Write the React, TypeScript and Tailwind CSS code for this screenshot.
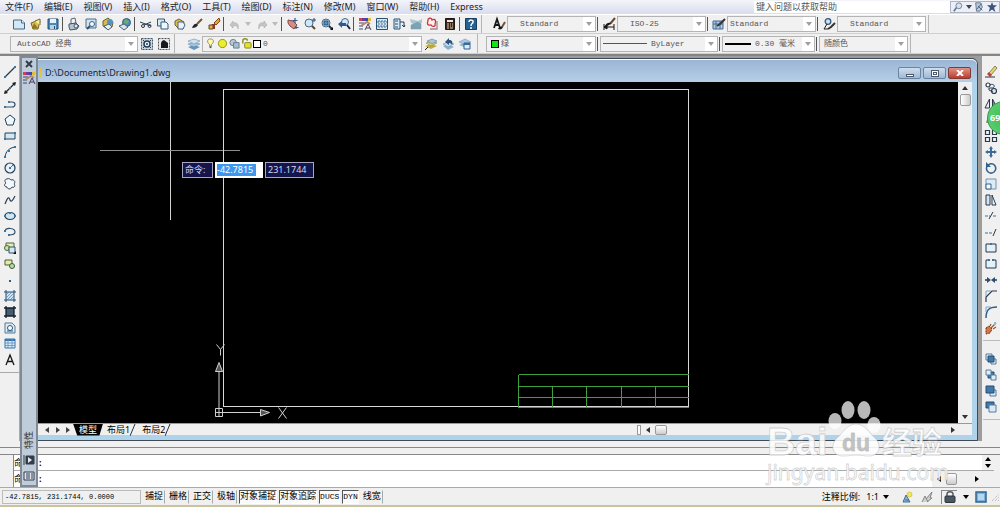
import React from 'react';

type IconMap = { [key: string]: React.ReactNode };

interface IconProps {
    name: string;
    className?: string;
}

interface ComboProps {
    label: string;
    value: string;
    className: string;
    selectClass?: string;
    children?: React.ReactNode;
}

// every glyph is drawn on a 12 x 12 grid
const ICONS: IconMap = {
    new: <><path d="M.5 2h8l3 3v6h-11z" fill="#d3e8f6" stroke="#456985" /><path d="M8.5 2v3h3" fill="#fff" stroke="#456985" /></>,
    open: <><path d="M1 5l8-3 1 1-2 8H3z" fill="#dbc24d" stroke="#766529" /><path d="M5 3l5-2v6" fill="#f7efb0" stroke="#766529" /><path d="M4 5l-2 6 6-1" fill="#8b7830" /></>,
    save: <><path d="M1 1h10v10H1z" fill="#4b86b5" stroke="#234f76" /><path d="M3 1h6v4H3z" fill="#e7f2fa" /><path d="M3 7h6v4H3z" fill="#b7d4e7" /><path d="M7 8h1v3H7z" fill="#264b6d" /></>,
    print: <><path d="M3 1l4-1 1 5-5 1z" fill="#eef3f8" stroke="#56677c" /><path d="M1 6l7-1 3 3-2 3-7 1-1-3z" fill="#b6c3d0" stroke="#41546a" /><circle cx="8" cy="8" r="2" fill="#e4edf5" stroke="#41546a" /></>,
    preview: <><path d="M1 1h10v9H1z" fill="#d0e5f4" stroke="#4c6c88" /><circle cx="7" cy="6" r="2.500" fill="#f6fbff" stroke="#3d5f7c" /><path d="M5 8l-3 3" stroke="#35526d" strokeWidth="2" /></>,
    publish: <><path d="M1 3l5-3 5 4-1 5-5 2-4-3z" fill="#d7bd45" stroke="#6b602a" /><circle cx="8" cy="4" r="3" fill="#5393c2" /><path d="M2 8l5-2 3 3-4 3z" fill="#e5eef5" stroke="#49637b" /></>,
    globe: <><circle cx="7.500" cy="4.500" r="4" fill="#4c8fbc" stroke="#345a7b" /><path d="M6 1l4 2-2 3-3-1z" fill="#6fae62" /><path d="M0 8l5-2 4 3-4 3z" fill="#d9e3ec" stroke="#4d6175" /></>,
    cut: <><path d="M0 4l11 4M4 7l7-3" stroke="#26384c" fill="none" /><circle cx="9.500" cy="8" r="1.500" fill="none" stroke="#26384c" /><circle cx="3" cy="8" r="1.500" fill="none" stroke="#26384c" /></>,
    copy: <><path d="M.5 1h7v7h-7z" fill="#d8e9f6" stroke="#345977" /><path d="M4 4h5l2 2v5H4z" fill="#eef7fc" stroke="#345977" /></>,
    paste: <><path d="M1 3l4-2 5 3-1 7-5-1-3-3z" fill="#d9bd52" stroke="#6f6130" /><path d="M4 4h5l2 3-2 4H4z" fill="#eaf3fa" stroke="#49637b" /></>,
    brush: <><path d="M6 6l5-5" stroke="#7b5430" strokeWidth="2" /><path d="M1 10c1-3 3-5 5-4l1 1c-1 2-3 3-6 3z" fill="#1f2430" /></>,
    match: <><path d="M6 5l5-5 1 3-4 4z" fill="#eda42f" stroke="#7c481c" /><path d="M1 11h6V6H4z" fill="#8d382b" /><path d="M1 7h4v4H1z" fill="#e0b04a" stroke="#6d4726" /></>,
    undo: <path d="M1 7l3-4v2c4-1 6 1 5 6 0-3-2-4-5-3v2z" fill="#c6c6c6" stroke="#a0a0a0" strokeWidth=".5" />,
    redo: <path d="M11 7L8 3v2C4 4 2 6 3 11c0-3 2-4 5-3v2z" fill="#c6c6c6" stroke="#a0a0a0" strokeWidth=".5" />,
    pan: <><path d="M1 2l5 1 4 4-3 4-4-3-2-3z" fill="#d68c83" stroke="#834944" /><path d="M8 0v5M5.500 2.500h5M9 8v3M7.500 9.500h4" stroke="#385b81" strokeWidth="1.200" /></>,
    zoom: <><circle cx="5" cy="5" r="4" fill="#cfe6f4" stroke="#456986" /><path d="M8 8l3 3" stroke="#60472f" strokeWidth="2" /><path d="M10 0v4M8 2h4" stroke="#294d71" /></>,
    zoomWin: <><circle cx="5" cy="5" r="4" fill="#cfe6f4" stroke="#456986" /><path d="M3 3h4v4H3z" fill="#5a94be" stroke="#244e73" /><path d="M8 8l3 3" stroke="#253649" strokeWidth="2" /><path d="M12 9v3H9z" fill="#111" /></>,
    zoomPrev: <><circle cx="7" cy="4" r="3.500" fill="#cfe6f4" stroke="#456986" /><path d="M9 7l3 4" stroke="#1f2d40" strokeWidth="2" /><path d="M0 6l4-3v2h4v3H4v2z" fill="#285d91" /></>,
    props: <><path d="M0 0h3v3H0z" fill="#dc3d4a" /><path d="M3 0h3v3H3z" fill="#713d9b" /><path d="M6 0h3v3H6z" fill="#304eac" /><path d="M9 0h3v3H9z" fill="#e1ba38" /><path d="M0 5h5M0 8h4M0 11h4" stroke="#3f4b77" /><path d="M2 8l6-4 3 2" stroke="#b08770" strokeWidth="2" /><path d="M6 12l3-6 3 6M7 10h4" fill="none" stroke="#4c3c58" /></>,
    grid: <><path d="M.5.500h11v11H.5z" fill="#d9e9f5" stroke="#285274" /><path d="M3 2v9M6 2v9M9 2v9M1 4h10M1 8h10" stroke="#416b8d" strokeDasharray="2 1" /></>,
    tool: <><path d="M1 1h6v10H1z" fill="#d5e7f4" stroke="#285274" /><path d="M2 3h3M2 6h3M2 9h3" stroke="#285274" /><path d="M7 4h4v5m-2-2l2 2 1-2" stroke="#293e56" fill="none" /></>,
    sheet: <><path d="M0 1l8 2 4-2v4l-4 2-7-2z" fill="#acc5ce" /><path d="M1 7l7-3 3 2v5H1z" fill="#75a5b7" stroke="#8796a0" strokeWidth=".5" /></>,
    markup: <><path d="M1 3c-1-3 4-4 4-1 4-2 4 2 3 4 1 3-3 3-4 1-4 1-4-2-3-4z" fill="#fff1f1" stroke="#d23038" strokeWidth="1.300" /><path d="M10 3v8H3" fill="none" stroke="#a78589" strokeWidth="1.300" /></>,
    calc: <><path d="M1.500.500h9v11h-9z" fill="#3a2420" stroke="#211715" /><path d="M3 2h6v2H3z" fill="#efe9db" /><path d="M3 6h2M6 6h1M8 6h1M3 8h2M6 8h1M8 8h1M3 10h2M6 10h3" stroke="#e9cda7" /></>,
    help: <><path d="M.5.500h11v11H.5z" fill="#286293" stroke="#173e62" /><path d="M4 4c0-3 5-2 4 0C8 6 6 5 6 8M6 9v2" stroke="#fff" strokeWidth="1.500" fill="none" /></>,
    textStyle: <><path d="M1 10l3-9 3 9M2 7h4" fill="none" stroke="#171717" strokeWidth="1.800" /><path d="M12 4l-3 5" stroke="#705437" strokeWidth="2" /><path d="M5 11c1-3 3-3 5-2-1 2-2 3-5 2z" fill="#171717" /></>,
    dimStyle: <><path d="M1 6v6M11 6v6M1 9h10M1 9l3-2v4z" stroke="#151515" fill="#151515" /><path d="M12 0L7 6" stroke="#694b35" strokeWidth="2" /><path d="M2 8c1-3 4-4 6-3-1 2-3 3-6 3z" fill="#151515" /></>,
    tableStyle: <><path d="M0 3h10v8H0z" fill="#b1cce2" stroke="#416b96" /><path d="M0 6h10M3 3v8M7 3v8" stroke="#416b96" /><path d="M12 1L7 6 4 8" stroke="#3a3433" strokeWidth="2" /></>,
    leaderStyle: <><circle cx="5" cy="3.500" r="2.800" fill="#cae1f0" stroke="#31587c" strokeWidth="1.300" /><path d="M4 6l-3 5h4" fill="none" stroke="#222" /><path d="M12 5L8 9l-3 2" stroke="#39312d" strokeWidth="2" /></>,
    gear: <><path d="M.5.500h11v11H.5z" fill="#c8d5df" stroke="#405367" strokeDasharray="2 1" /><circle cx="6" cy="6" r="3" fill="#edf4f8" stroke="#263e54" strokeWidth="1.500" /><circle cx="6" cy="6" r="1" fill="#263e54" /><path d="M2 2l2 2M10 2L8 4M2 10l2-2M10 10L8 8" stroke="#263e54" /></>,
    home: <><path d="M.5.500h11v11H.5z" fill="#e8e8e8" stroke="#555" strokeDasharray="2 1" /><path d="M6 2l4 3v5H3V5l1-2z" fill="#15191d" /></>,
    layers: <><path d="M0 9l6-2 6 2-6 3z" fill="#6894ba" /><path d="M0 6l6-2 6 2-6 3z" fill="#a7c6df" stroke="#5481a9" strokeWidth=".5" /><path d="M0 3l6-2 6 2-6 3z" fill="#d1e2ee" stroke="#5481a9" strokeWidth=".5" /></>,
    layerSet: <><path d="M0 8l6-2 6 2-6 3z" fill="#bfae3a" /><path d="M1 5l5-2 6 2-6 3z" fill="#d8d36b" stroke="#777637" strokeWidth=".5" /><path d="M2 3l5-2 5 2-5 3z" fill="#a9c6da" stroke="#4e718d" strokeWidth=".5" /><path d="M0 12l3-3" stroke="#222" /></>,
    layerPrev: <><path d="M1 8l5-2 6 3-6 3z" fill="#8eb3d0" /><path d="M1 6l5-2 6 2-6 3z" fill="#c6dbea" stroke="#5b7fa1" strokeWidth=".5" /><path d="M3 4l4-4v2c3 0 4 2 3 5-1-2-2-2-3-2v2z" fill="#28547e" /></>,
    layerState: <><path d="M0 7l5-2 5 2-5 2z" fill="#8eb3d0" /><path d="M0 4l6-3 6 3-6 3z" fill="#afc7dc" stroke="#6488a5" strokeWidth=".5" /><path d="M5 5h6v6H5z" fill="#dcecf8" stroke="#2e5f8f" /><path d="M5 5h6v2H5z" fill="#2f6da3" /></>,
    bulb: <><path d="M6 1c4 0 4 4 1 6v2H5V7C2 5 2 1 6 1z" fill="#fffcae" stroke="#908747" /><path d="M5 10h2" stroke="#555" strokeWidth="2" /></>,
    sun: <circle cx="6" cy="6" r="4.500" fill="#eded28" stroke="#8b8d1e" />,
    freeze: <><circle cx="4.500" cy="5" r="3.500" fill="#bcc9d3" stroke="#637c91" /><path d="M5 5h6v6H5z" fill="#a9bccb" stroke="#637c91" /></>,
    unlock: <><path d="M2 6V3c0-3 5-3 5 0" fill="none" stroke="#8a8d20" strokeWidth="1.500" /><rect x="4" y="5" width="7" height="6" rx="1" fill="#e2e02e" stroke="#83851d" /></>,
    line: <><path d="M1 11L11 1" stroke="#27394a" strokeWidth="1.200" /><path d="M0 10h2v2H0zM10 0h2v2h-2z" fill="#3976a4" /></>,
    xline: <><path d="M1 11L11 1" stroke="#18222c" strokeWidth="1.200" /><path d="M0 12l1-4 3 3zM12 0L8 1l3 3z" fill="#222" /><path d="M5 5h2v2H5z" fill="#3976a4" /></>,
    pline: <><path d="M1 9h7c4 0 4-5 0-5H5" fill="none" stroke="#31506e" strokeWidth="1.200" /><path d="M0 8h2v2H0zM4 3h2v2H4z" fill="#3976a4" /></>,
    polygon: <path d="M6 1l5 4-2 6H3L1 5z" fill="#eef7fc" stroke="#263e56" />,
    rect: <><path d="M1 3h10v6H1z" fill="#d2e7f3" stroke="#263e56" /><path d="M0 8h2v2H0zM10 2h2v2h-2z" fill="#3976a4" /></>,
    arc: <><path d="M1 11C2 5 5 2 11 1" fill="none" stroke="#263e56" /><path d="M0 10h2v2H0zM4 4h2v2H4zM10 0h2v2h-2z" fill="#3976a4" /></>,
    circle: <><circle cx="6" cy="6" r="5" fill="#e5f2f9" stroke="#263e56" strokeWidth="1.200" /><path d="M6 6l3-3" stroke="#3976a4" /><path d="M5 5h2v2H5z" fill="#3976a4" /></>,
    cloud: <path d="M3 1c2-1 3 0 4 1 3-1 5 2 3 4 2 2 0 4-2 3-1 3-5 2-5 0C0 9 0 6 2 5 0 3 1 1 3 1z" fill="#f4f8fb" stroke="#263e56" />,
    spline: <path d="M1 10c3-8 4-7 5-4s3 0 5-4" fill="none" stroke="#263e56" strokeWidth="1.200" />,
    ellipse: <><ellipse cx="6" cy="6" rx="5" ry="3.500" fill="#cee5f2" stroke="#263e56" strokeWidth="1.200" /><path d="M5 2h2v2H5zM0 5h2v2H0zM10 5h2v2h-2z" fill="#3976a4" /></>,
    ellipseArc: <><path d="M1 5c1-4 10-3 10 1 0 3-4 3-6 3" fill="none" stroke="#31506e" strokeWidth="1.200" /><path d="M0 4h2v2H0zM4 8h2v2H4z" fill="#3976a4" /></>,
    insert: <><path d="M2 1h8v6H2z" fill="#e8ecb3" stroke="#47663e" /><circle cx="3" cy="6" r="2.500" fill="#cfe6a2" stroke="#436742" /><path d="M5 5h6v6H5z" fill="#d6e7f3" stroke="#31506e" /><path d="M12 9v3H9z" fill="#111" /></>,
    block: <><path d="M1 2h7v5H1z" fill="#e6eca4" stroke="#465e3f" /><circle cx="8" cy="8" r="2.500" fill="#b8dc9c" stroke="#365b3d" /></>,
    point: <path d="M5 6h2v2H5z" fill="#255c8e" />,
    hatch: <><path d="M2 2h8v8H2z" fill="#d1e3f0" /><path d="M2 0v12M10 0v12M0 2h12M0 10h12" stroke="#254b70" /><path d="M2 5l3-3M2 8l6-6M3 10l7-7M6 10l4-4" stroke="#4c83ae" strokeWidth=".7" /></>,
    gradient: <><path d="M2 2h8v8H2z" fill="#485c70" /><path d="M2 0v12M10 0v12M0 2h12M0 10h12" stroke="#12202e" strokeWidth="1.300" /></>,
    region: <><path d="M1 1h7l3 3v7H1z" fill="#dcecf6" stroke="#4e7b9b" /><circle cx="6" cy="6" r="2.500" fill="#fff" stroke="#2d5678" /><path d="M3 9h6" stroke="#2d5678" /></>,
    table: <><path d="M1 1h10v9H1z" fill="#dcecf8" stroke="#3774aa" /><path d="M1 2h10" stroke="#3774aa" strokeWidth="2" /><path d="M1 5h10M1 7.500h10M4 1v9M8 1v9" stroke="#5d91bd" strokeWidth=".8" /></>,
    mtext: <path d="M2 11L6 1l4 10M3.500 7.500h5" fill="none" stroke="#171717" strokeWidth="1.300" />,
    erase: <><path d="M4 7l6-7 2 2-6 7z" fill="#e4d868" stroke="#625a36" strokeWidth=".7" /><path d="M2 8l2-2 3 3-2 2z" fill="#bd3f41" /><path d="M0 11h10" stroke="#333" /></>,
    copyObj: <><circle cx="3" cy="3" r="2" fill="#fff" stroke="#27394a" strokeWidth="1.200" /><circle cx="9" cy="9" r="2.500" fill="#d2e7f3" stroke="#27394a" strokeWidth="1.200" /><path d="M5 3c3-2 6 1 3 3H4v2l4 2" fill="none" stroke="#27394a" /></>,
    mirror: <><path d="M4.500 1v9H0z" fill="#e7eff5" stroke="#27394a" /><path d="M7.500 1v9H12z" fill="#6b9ec4" stroke="#27394a" /></>,
    offset: <><path d="M10 1C5 1 2 4 2 9" fill="none" stroke="#27394a" /><circle cx="7" cy="8" r="3" fill="none" stroke="#27394a" /></>,
    array: <path d="M.5.500h4v4h-4zM7.500.500h4v4h-4zM.5 7.500h4v4h-4zM7.500 7.500h4v4h-4z" fill="#eef4f8" stroke="#27394a" strokeWidth="1.200" />,
    move: <path d="M6 0l2 3H7v2h2V4l3 2-3 2V7H7v2h1l-2 3-2-3h1V7H3v1L0 6l3-2v1h2V3H4z" fill="#3b6b96" />,
    rotate: <><path d="M3 3c6-4 10 3 6 7-4 3-9-1-7-6" fill="none" stroke="#31618b" strokeWidth="1.500" /><path d="M1 0v5h5z" fill="#31618b" /></>,
    scale: <><path d="M1 1h10v10H1z" fill="#dcecf6" stroke="#7294ae" /><path d="M1 6h5v5H1z" fill="#f8fbfd" stroke="#31618b" /></>,
    stretch: <><path d="M1 1h4v10H1z" fill="#d3e5f1" stroke="#27394a" /><path d="M7 1l4 10H7z" fill="#eff5f9" stroke="#27394a" /></>,
    trim: <><path d="M0 6h5M8 6h4" stroke="#3e7198" strokeDasharray="3 1" /><path d="M4 9l4-7" stroke="#27394a" /></>,
    extend: <><path d="M0 7h8" stroke="#3e7198" strokeDasharray="3 1" /><path d="M8 10l3-7" stroke="#27394a" /></>,
    breakPt: <><path d="M1 2h10v8H1z" fill="#e5f1f8" stroke="#27394a" /><path d="M5 1h2v2H5z" fill="#3976a4" /></>,
    breakGap: <><path d="M4 2H1v8h10V2H8" fill="#e5f1f8" stroke="#27394a" /><path d="M3 1h2v2H3zM7 1h2v2H7z" fill="#3976a4" /></>,
    join: <><path d="M0 6h4M8 6h4" stroke="#27394a" strokeWidth="1.500" /><path d="M2 3l4 3-4 3zM10 3L6 6l4 3z" fill="#294d71" /></>,
    chamfer: <><path d="M1 12V7l6-6h5" fill="none" stroke="#27394a" strokeWidth="1.200" /><path d="M1 6V1h5" fill="none" stroke="#7ba7c8" /></>,
    fillet: <><path d="M1 12C1 4 4 1 12 1" fill="none" stroke="#31618b" strokeWidth="1.500" /><path d="M1 6V1h5" fill="none" stroke="#7ba7c8" /></>,
    explode: <><path d="M1 6l3-2 3 3-2 4-4 1z" fill="#d37844" stroke="#6e2c25" strokeDasharray="2 1" /><path d="M6 6l5-5M8 7l3-2M5 4l1-2" stroke="#9b5a2c" strokeWidth="1.300" /><path d="M9 0h2v3h-2z" fill="#9ab6c8" /></>,
    front: <><path d="M1 1h6v6H1zM6 6h5v5H6z" fill="#e2edf5" stroke="#537ea1" /><path d="M3 3h6v6H3z" fill="#4179a9" stroke="#254f76" /></>,
    back: <><path d="M3 3h6v6H3z" fill="#4179a9" stroke="#254f76" /><path d="M1 1h5v5H1zM6 6h5v5H6z" fill="#e2edf5" stroke="#537ea1" /></>,
    above: <><path d="M5 5h6v6H5z" fill="#dbeaf5" stroke="#537ea1" /><path d="M1 1h8v7H1z" fill="#4179a9" stroke="#254f76" /></>,
    under: <><path d="M1 1h8v6H1z" fill="#4179a9" stroke="#254f76" /><path d="M4 4h7v7H4z" fill="#dbeaf5" stroke="#537ea1" /></>,
    search: <><circle cx="7" cy="4.500" r="3.500" fill="#d6e4f0" stroke="#64758b" /><path d="M4 7l-3 4" stroke="#64758b" strokeWidth="2" /></>,
    comm: <><path d="M2 1h6l2 5-3 5H3z" fill="#bdc9d9" stroke="#596b86" /><path d="M3 9l6-7M5 5l5 5" stroke="#3d526e" /></>,
    star: <path d="M6 0l1.500 4H12L8.500 7l1.500 5-4-3-4 3 1.500-5L0 4h4.500z" fill="#3e5477" />,
    annoVis: <><path d="M2 11l3-7 4 7zM4 9h4" fill="#91b8d7" stroke="#416d92" /><circle cx="8.500" cy="3.500" r="2.500" fill="#f5e64d" stroke="#b4a93e" strokeWidth=".5" /></>,
    annoAuto: <path d="M1 11l3-6 3 6M5 8l6-7-2 6h2l-5 4" fill="#d0d0d0" stroke="#858585" />,
    lock: <><path d="M3 6V3c0-3 6-3 6 0v3" fill="none" stroke="#555e68" strokeWidth="1.500" /><rect x="1" y="5" width="10" height="6.500" rx="1" fill="#4b5662" stroke="#2c343d" /></>,
    clean: <><path d="M1 1h10v10H1z" fill="#7eb1dc" stroke="#32648e" strokeWidth="1.500" /><path d="M3 3h6v6H3z" fill="#b7d6ef" /></>
};

const STANDARD_ICONS = [
    ['new', 'open', 'save'],
    ['print', 'preview', 'publish', 'globe'],
    ['cut', 'copy', 'paste', 'brush', 'match']
];
const VIEW_ICONS = ['pan', 'zoom', 'zoomWin', 'zoomPrev'];
const PALETTE_ICONS = ['props', 'grid', 'tool', 'sheet', 'markup', 'calc'];
const DRAW_ICONS = [
    'line', 'xline', 'pline', 'polygon', 'rect', 'arc', 'circle', 'cloud', 'spline', 'ellipse',
    'ellipseArc', 'insert', 'block', 'point', 'hatch', 'gradient', 'region', 'table', 'mtext'
];
const MODIFY_ICONS = [
    'erase', 'copyObj', 'mirror', 'offset', 'array', 'move', 'rotate', 'scale', 'stretch', 'trim',
    'extend', 'breakPt', 'breakGap', 'join', 'chamfer', 'fillet', 'explode'
];
const ORDER_ICONS = ['front', 'back', 'above', 'under'];
const MENUS = [
    '文件(F)', '编辑(E)', '视图(V)', '插入(I)', '格式(O)', '工具(T)', '绘图(D)',
    '标注(N)', '修改(M)', '窗口(W)', '帮助(H)', 'Express'
];
const MODES = [
    { text: '捕捉', on: false },
    { text: '栅格', on: false },
    { text: '正交', on: false },
    { text: '极轴', on: false },
    { text: '对象捕捉', on: true },
    { text: '对象追踪', on: true },
    { text: 'DUCS', on: true },
    { text: 'DYN', on: true },
    { text: '线宽', on: false }
];

const Icon = ({ name, className = 'size-3' }: IconProps) => (
    <svg viewBox="0 0 12 12" className={`${className} shrink-0 overflow-visible`} fill="none" aria-hidden="true">
        {ICONS[name]}
    </svg>
);

const ToolButton = ({ name }: { name: string }) => (
    <button aria-label={name} className="flex h-4 w-[17px] shrink-0 items-center justify-center">
        <Icon name={name} />
    </button>
);

const Arrow = ({ className }: { className: string }) => (
    <svg viewBox="0 0 6 4" className={`h-1 w-1.5 shrink-0 ${className}`} aria-hidden="true">
        <path d="M0 0h6L3 4z" fill="currentColor" />
    </svg>
);

const Divider = () => <span className="mx-px h-3.5 w-px shrink-0 border-l border-[#555] box-content" />;

const Combo = ({ label, value, className, selectClass = 'pl-1', children }: ComboProps) => (
    <div className={`flex h-4 shrink-0 items-center border border-[#b4b4b4] bg-[#f1f1f1] ${className}`}>
        {children}
        <select
            aria-label={label}
            className={`h-3.5 min-w-0 flex-1 appearance-none bg-transparent font-['Liberation_Mono','Noto_Sans_CJK_SC',monospace] text-[8px] leading-3.5 text-[#555] outline-none ${selectClass}`}
        >
            <option>{value}</option>
        </select>
        <span className="pointer-events-none flex h-3.5 w-3 items-center justify-center bg-white">
            <Arrow className="text-[#a0a0a0]" />
        </span>
    </div>
);

const MenuBar = () => (
    <header className="flex h-3.5 items-center justify-between bg-linear-to-b from-[#f4f5fb] to-[#d8dced] pl-[5px]">
        <nav className="flex gap-[11px] whitespace-nowrap text-[9px] leading-3 text-[#222]">
            {MENUS.map(menu => <button key={menu}>{menu}</button>)}
        </nav>
        <div className="flex h-3.5 items-center">
            <input
                aria-label="帮助"
                placeholder="键入问题以获取帮助"
                className="h-3 w-[196px] bg-white pl-0.5 text-[9px] leading-3 placeholder:text-[#555]"
            />
            <div className="flex h-3 w-[50px] items-center justify-between border border-[#aeb4c4] bg-[#eceffa] px-0.5 text-[#555]">
                <Icon name="search" className="size-2.5" />
                <Arrow className="text-[#444]" />
                <Icon name="comm" className="size-2.5" />
                <Icon name="star" className="size-2.5" />
            </div>
        </div>
    </header>
);

const StandardBar = () => (
    <div className="flex h-5 items-center overflow-hidden border-y border-t-white border-b-[#cfcfcf]">
        <div className="flex h-full items-center border-r border-[#b5b5b5] pl-2.5 pr-0.5">
            {STANDARD_ICONS.map(group => (
                <React.Fragment key={group[0]}>
                    {group.map(name => <ToolButton key={name} name={name} />)}
                    <Divider />
                </React.Fragment>
            ))}
            <ToolButton name="undo" />
            <Arrow className="mx-0.5 text-[#bbb]" />
            <ToolButton name="redo" />
            <Arrow className="mx-0.5 text-[#bbb]" />
            <Divider />
            {VIEW_ICONS.map(name => <ToolButton key={name} name={name} />)}
            <Divider />
            {PALETTE_ICONS.map(name => <ToolButton key={name} name={name} />)}
            <Divider />
            <ToolButton name="help" />
        </div>
        <div className="flex h-full items-center border-r border-[#b5b5b5] pl-2 pr-0.5">
            <ToolButton name="textStyle" />
            <Combo label="文字样式" value="Standard" className="w-[89px]" selectClass="pl-3" />
            <Divider />
            <ToolButton name="dimStyle" />
            <Combo label="标注样式" value="ISO-25" className="w-[89px]" selectClass="pl-3" />
            <Divider />
            <ToolButton name="tableStyle" />
            <Combo label="表格样式" value="Standard" className="w-[89px]" selectClass="pl-0.5" />
            <Divider />
            <ToolButton name="leaderStyle" />
            <Combo label="多重引线样式" value="Standard" className="w-[89px]" selectClass="pl-3" />
        </div>
    </div>
);

const LayerBar = () => (
    <div className="flex h-5 items-center overflow-hidden border-b border-[#cfcfcf]">
        <div className="flex h-full items-center border-r border-[#b5b5b5] pl-2.5 pr-0.5">
            <Combo label="工作空间" value="AutoCAD 经典" className="w-[128px]" selectClass="pl-1.5" />
            <ToolButton name="gear" />
            <ToolButton name="home" />
        </div>
        <div className="flex h-full items-center border-r border-[#b5b5b5] pl-2.5 pr-1">
            <ToolButton name="layers" />
            <Combo label="图层" value="0" className="w-[220px]" selectClass="pl-0.5">
                <span className="flex items-center gap-px pl-0.5">
                    <Icon name="bulb" className="size-[11px]" />
                    <Icon name="sun" className="size-[11px]" />
                    <Icon name="freeze" className="size-[11px]" />
                    <Icon name="unlock" className="size-[11px]" />
                    <span className="size-2 border border-black bg-white" />
                </span>
            </Combo>
            <ToolButton name="layerSet" />
            <ToolButton name="layerPrev" />
            <ToolButton name="layerState" />
        </div>
        <div className="flex h-full items-center border-r border-[#b5b5b5] pl-2 pr-0.5">
            <Combo label="颜色" value="绿" className="w-[110px]" selectClass="pl-0.5">
                <span className="ml-1 size-2 border border-black bg-[#12e312]" />
            </Combo>
            <Divider />
            <Combo label="线型" value="ByLayer" className="w-[118px]" selectClass="pl-1">
                <span className="ml-0.5 h-px w-11 bg-[#555]" />
            </Combo>
            <Divider />
            <Combo label="线宽" value="0.30 毫米" className="w-[93px]" selectClass="pl-1">
                <span className="ml-0.5 h-0.5 w-[26px] bg-black" />
            </Combo>
            <Divider />
            <Combo label="打印样式" value="随颜色" className="w-[89px]" selectClass="pl-1" />
        </div>
    </div>
);

const Drawing = () => (
    <svg className="block h-full w-full" aria-label="Drawing1" shapeRendering="crispEdges" fill="none">
        <path d="M132.500 0v138" stroke="#d0d0d0" />
        <path d="M62 68.500h140" stroke="#8e8e8e" />
        <path d="M185.500 7.500h465v317h-465z" stroke="#d8d8d8" />
        <path d="M480.500 292.500h170M480.500 304.500h170M480.500 315.500h170M480.500 325.500h170M480.500 292.500v33M514.500 304.500v21M548.500 304.500v21M583.500 304.500v21M617.500 304.500v21" stroke="#3ea13e" />
        <g stroke="#d0d0d0" shapeRendering="auto">
            <path d="M177.500 326.500h7v8h-7zM181 334V289M177 330.500h46" />
            <path d="M181 280.500l-3.500 9h7zM222.500 327.500v6.500l9-3.500z" fill="#555" />
            <path d="M178.500 262.500l4 5v6M186.500 262.500l-4 5M240.500 325.500l8 11M248.500 325.500l-8 11" />
        </g>
    </svg>
);

const DynamicInput = () => (
    <div className="absolute left-36 top-20 flex h-4 gap-0.5 text-[9px] leading-3 text-[#d5d5ee]">
        <label htmlFor="dyn-x" className="w-[31px] border border-[#a7a7c4] bg-[#15154d] px-0.5 py-px">命令:</label>
        <div className="w-12 border border-white bg-white p-px">
            <input id="dyn-x" defaultValue="-42.7815" className="block h-3 w-[39px] bg-[#3d97ee] text-[9px] leading-3 text-white" />
        </div>
        <input aria-label="Y" defaultValue="231.1744" className="w-[49px] border border-[#a7a7c4] bg-[#15154d] px-0.5" />
    </div>
);

const LayoutTabs = () => (
    <div className="flex h-3 items-center justify-between border-t border-[#999] bg-[#f0f0f0] pr-3 text-[9px] leading-3">
        <div className="flex h-full items-center">
            <div className="flex w-[35px] justify-between pl-1.5 pr-0.5 text-[#444]">
                <Arrow className="rotate-90" />
                <Arrow className="-rotate-90" />
                <Arrow className="-rotate-90" />
            </div>
            <button className="bg-black px-1.5 text-white [clip-path:polygon(0_0,100%_0,88%_100%,14%_100%)]">模型</button>
            <button className="flex items-center pl-1">布局1<svg className="h-3 w-1.5" viewBox="0 0 6 12"><path d="M0 12L5 0" stroke="#333" /></svg></button>
            <button className="flex items-center pl-1.5">布局2<svg className="h-3 w-1.5" viewBox="0 0 6 12"><path d="M0 12L5 0" stroke="#333" /></svg></button>
        </div>
        <div className="flex h-full w-[35%] items-center gap-1 text-[#333]">
            <span className="h-2.5 w-1 border border-[#999] bg-white" />
            <Arrow className="rotate-90" />
            <span className="h-2.5 w-3 rounded-xs border border-[#999] bg-linear-to-b from-white to-[#ccc]" />
            <Arrow className="ml-auto mr-1 -rotate-90" />
        </div>
    </div>
);

const DrawingWindow = () => (
    <section className="flex min-w-0 flex-1 flex-col rounded-tr-md border border-[#3e4b57] bg-[#b0d3ec]">
        <div className="flex h-[23px] items-center gap-1 rounded-tr-md border-t border-white bg-linear-to-b from-[#9bb6d5] to-[#b6cfe7] pl-px pr-1.5 pt-1">
            <span className="h-2.5 w-0.5 bg-[#dfc542]" />
            <h1 className="flex-1 text-[9px] leading-3 text-[#1a2430]">D:\Documents\Drawing1.dwg</h1>
            <div className="flex gap-0.5">
                <button aria-label="最小化" className="flex h-3 w-[23px] items-center justify-center rounded-xs border border-[#6b84a2] bg-linear-to-b from-[#cfdeed] to-[#9fb9d5]">
                    <span className="mt-1 h-[3px] w-2 border border-[#4b5a6d] bg-white" />
                </button>
                <button aria-label="最大化" className="flex h-3 w-[23px] items-center justify-center rounded-xs border border-[#6b84a2] bg-linear-to-b from-[#cfdeed] to-[#9fb9d5]">
                    <span className="flex h-[7px] w-2 items-center justify-center border border-[#4b5a6d] bg-white">
                        <span className="h-[3px] w-1 border border-[#4b5a6d]" />
                    </span>
                </button>
                <button aria-label="关闭" className="flex h-3 w-[23px] items-center justify-center rounded-xs border border-[#7c3b36] bg-linear-to-b from-[#de9187] to-[#bd3a2b]">
                    <svg viewBox="0 0 8 6" className="h-1.5 w-2"><path d="M1 0l6 6M7 0L1 6" stroke="#fff" strokeWidth="2" /></svg>
                </button>
            </div>
        </div>
        <div className="mb-[5px] mr-[5px] flex flex-1 flex-col">
            <div className="flex flex-1">
                <div className="relative min-w-0 flex-1 bg-black">
                    <div className="absolute inset-0"><Drawing /></div>
                    <DynamicInput />
                </div>
                <div className="flex w-3.5 flex-col items-center bg-[#f0f0f0] py-1 text-[#333]">
                    <Arrow className="rotate-180" />
                    <span className="mt-1 h-3 w-[11px] rounded-xs border border-[#999] bg-linear-to-r from-white to-[#ccc]" />
                    <Arrow className="mt-auto" />
                </div>
            </div>
            <LayoutTabs />
        </div>
    </section>
);

const PropertiesPalette = () => (
    <aside className="absolute bottom-0 left-5 top-0.5 flex w-[18px] flex-col items-center border-2 border-[#7f8a94] bg-[#bfcddb] pt-0.5">
        <button aria-label="关闭特性"><svg viewBox="0 0 8 8" className="block size-2"><path d="M1 1l6 6M7 1L1 7" stroke="#333d4a" strokeWidth="2" /></svg></button>
        <div className="mt-1"><Icon name="props" /></div>
        <span className="mt-auto text-[9px] leading-3 text-[#333] [writing-mode:sideways-lr]">特性</span>
        <svg viewBox="0 0 12 10" className="mt-1.5 h-2.5 w-3"><path d="M1 0v10" stroke="#333d4a" /><path d="M3 1h8v8H3z" stroke="#333d4a" fill="#333d4a" /><path d="M5 2v6l4-3z" fill="#e3eaf1" /></svg>
        <svg viewBox="0 0 12 10" className="mb-1 mt-1.5 h-2.5 w-3"><path d="M1 1h10v8H1z" stroke="#333d4a" fill="#dce5ee" /><path d="M3 3h4M3 5h4M3 7h4M9 2v6" stroke="#333d4a" /></svg>
    </aside>
);

const CommandLine = () => (
    <section className="flex h-[46px] flex-col bg-[#f0f0f0] pt-1.5 text-[9px] leading-3 text-black">
        <div className="h-2 border-y border-[#888]" />
        <div className="ml-[13px] mr-1.5 flex flex-1 flex-col border-l border-[#888]">
            <div className="flex h-4 items-center border-b border-[#aaa] bg-white">
                <span className="w-[25px]">命令</span>
                <span className="flex-1 font-bold">:</span>
                <div className="flex h-full w-3 flex-col items-center justify-between bg-[#f0f0f0] py-0.5">
                    <Arrow className="rotate-180" />
                    <Arrow className="" />
                </div>
            </div>
            <div className="flex flex-1 items-center bg-white">
                <label htmlFor="command" className="w-[25px]">命令</label>
                <span className="font-bold">:</span>
                <input id="command" className="h-3 min-w-0 flex-1 outline-none" />
                <div className="flex h-full w-[62px] items-center gap-1 bg-[#f0f0f0] pl-1">
                    <Arrow className="rotate-90" />
                    <span className="h-3 w-[11px] rounded-xs border border-[#999] bg-linear-to-b from-white to-[#ccc]" />
                    <Arrow className="ml-auto mr-3.5 -rotate-90" />
                </div>
            </div>
        </div>
    </section>
);

const StatusBar = () => (
    <footer className="flex h-5 items-center justify-between border-b-2 border-t border-b-[#c9c3a0] border-t-[#aaa] bg-[#f0f0f0] pl-0.5 pr-px text-[9px] leading-3 text-black">
        <div className="flex items-center gap-0.5 whitespace-nowrap font-['Liberation_Mono','Noto_Sans_CJK_SC',monospace]">
            <output className="h-3.5 w-[139px] border border-[#bbb] px-0.5 text-[7px] leading-3">-42.7815, 231.1744, 0.0000</output>
            {MODES.map(mode => (
                <button
                    key={mode.text}
                    aria-pressed={mode.on}
                    className={mode.on ? 'h-3.5 border border-b-white border-l-[#555] border-r-white border-t-[#555] bg-[#fafafa] text-[9px] leading-3' : 'h-3.5 border border-[#f0f0f0] border-r-[#aaa] px-px text-[9px] leading-3'}
                >
                    {/^[A-Z]/.test(mode.text) ? <span className="text-[8px]">{mode.text}</span> : mode.text}
                </button>
            ))}
        </div>
        <div className="flex items-center gap-1 whitespace-nowrap">
            <span>注释比例:</span>
            <button className="ml-0.5 flex items-center gap-1">1:1 <Arrow className="" /></button>
            <span className="ml-2"><Icon name="annoVis" /></span>
            <span className="ml-1"><Icon name="annoAuto" /></span>
            <span className="ml-1 flex h-3.5 w-4 items-center justify-center border-l border-t border-[#888]"><Icon name="lock" /></span>
            <Arrow className="mx-0.5" />
            <Icon name="clean" />
            <svg viewBox="0 0 8 8" className="size-2"><path d="M1 8l7-7M4 8l4-4M7 8l1-1" stroke="#aaa" strokeDasharray="1 1" /></svg>
        </div>
    </footer>
);

const Watermark = () => (
    <svg viewBox="0 0 180 90" className="pointer-events-none absolute bottom-4 right-[53px] h-[90px] w-[180px] overflow-visible" aria-hidden="true">
        <g fill="#fff" fillOpacity=".72">
            <ellipse cx="68" cy="20" rx="6.500" ry="8" />
            <ellipse cx="81" cy="9" rx="6.500" ry="9" />
            <ellipse cx="97" cy="9" rx="6.500" ry="9" />
            <ellipse cx="107" cy="24" rx="6.500" ry="8" />
        </g>
        <g fill="#fff" fillOpacity=".85" stroke="#b5b5b5" strokeOpacity=".6" strokeWidth=".8" fontFamily="'Liberation Sans', 'Noto Sans CJK SC', sans-serif" fontWeight="bold">
            <path d="M89 23c9 0 13 9 19 14 7 7 5 18-6 18-6 0-9-1-13-1s-7 1-13 1c-11 0-13-11-6-18 6-5 10-14 19-14z" />
            <text x="0" y="54" fontSize="39">Bai</text>
            <text x="75" y="50" fontSize="23" fill="#b9b9b9">du</text>
            <text x="115" y="52" fontSize="30">经验</text>
            <text x="0" y="79" fontSize="21" fontWeight="normal" fontFamily="'Noto Sans', sans-serif">jingyan.baidu.com</text>
        </g>
    </svg>
);

export default function App() {
    return (
        <div className="relative flex min-h-screen flex-col overflow-hidden bg-[#f0f0f0] font-['Noto_Sans','Noto_Sans_CJK_SC',sans-serif]">
            <MenuBar />
            <StandardBar />
            <LayerBar />
            <div className="relative flex flex-1 flex-col">
                <main className="flex flex-1 border-t-2 border-[#858585]">
                    <aside className="flex w-5 flex-col items-center border-r border-[#aaa]">
                        <div className="flex w-full flex-col items-center border-b border-[#aaa] pb-1 pt-2">
                            {DRAW_ICONS.map(name => <ToolButton key={name} name={name} />)}
                        </div>
                    </aside>
                    <div className="flex min-w-0 flex-1 bg-[#9c9c9c] pl-[17px] pr-1 pt-0.5">
                        <DrawingWindow />
                    </div>
                    <aside className="relative flex w-[18px] flex-col items-center">
                        <div className="flex flex-col border-b border-[#bbb] pb-1 pt-2">
                            {MODIFY_ICONS.map(name => <ToolButton key={name} name={name} />)}
                        </div>
                        <div className="flex flex-col border-b border-[#bbb] pb-1 pt-2.5">
                            {ORDER_ICONS.map(name => <ToolButton key={name} name={name} />)}
                        </div>
                        <span className="absolute -right-[21px] top-[45px] flex size-[34px] items-center rounded-full border border-[#39994a] bg-radial from-[#3fbb56] to-[#63d274] pl-0.5 text-[9px] font-bold text-white">69</span>
                    </aside>
                </main>
                <CommandLine />
                <PropertiesPalette />
            </div>
            <StatusBar />
            <Watermark />
        </div>
    );
}
